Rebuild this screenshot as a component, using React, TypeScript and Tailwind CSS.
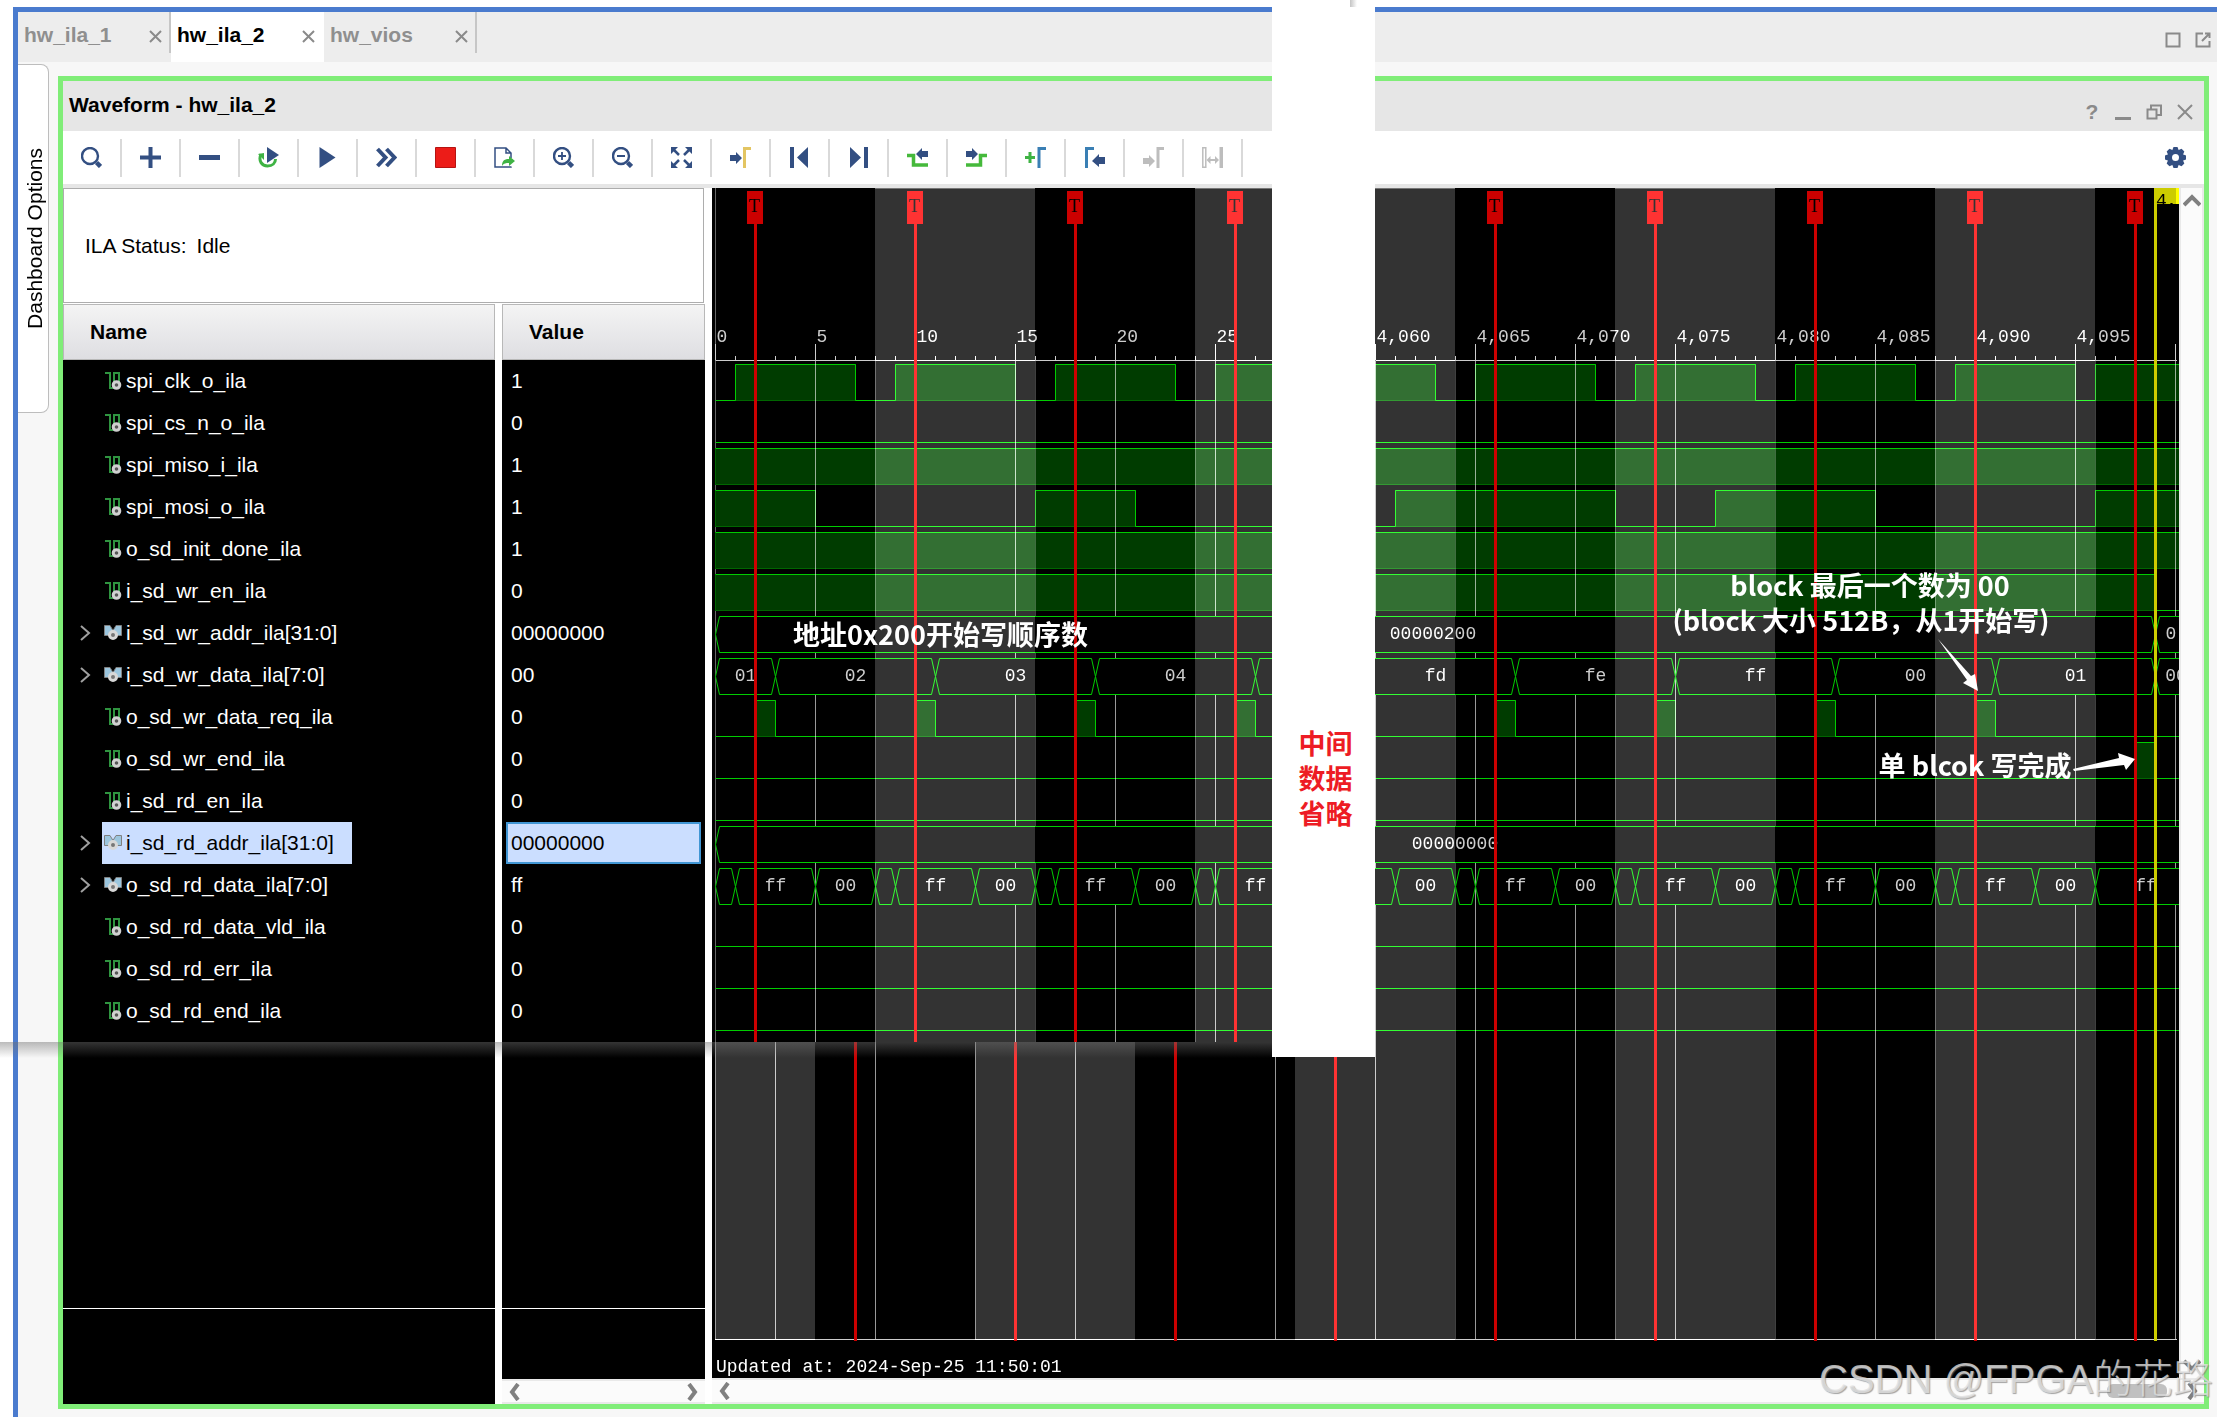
import React from "react";

type Signal = { name: string; value: string; bus?: boolean; selected?: boolean };

const signals: Signal[] = [
  { name: "spi_clk_o_ila", value: "1" },
  { name: "spi_cs_n_o_ila", value: "0" },
  { name: "spi_miso_i_ila", value: "1" },
  { name: "spi_mosi_o_ila", value: "1" },
  { name: "o_sd_init_done_ila", value: "1" },
  { name: "i_sd_wr_en_ila", value: "0" },
  { name: "i_sd_wr_addr_ila[31:0]", value: "00000000", bus: true },
  { name: "i_sd_wr_data_ila[7:0]", value: "00", bus: true },
  { name: "o_sd_wr_data_req_ila", value: "0" },
  { name: "o_sd_wr_end_ila", value: "0" },
  { name: "i_sd_rd_en_ila", value: "0" },
  { name: "i_sd_rd_addr_ila[31:0]", value: "00000000", bus: true, selected: true },
  { name: "o_sd_rd_data_ila[7:0]", value: "ff", bus: true },
  { name: "o_sd_rd_data_vld_ila", value: "0" },
  { name: "o_sd_rd_err_ila", value: "0" },
  { name: "o_sd_rd_end_ila", value: "0" },
];

/* ---------- icons ---------- */

const NAVY = "#334f82";
const GREEN = "#3fb344";
const GREY = "#bdbdbd";

function Icon({ children }: { children: React.ReactNode }) {
  return (
    <svg viewBox="0 0 21 21" className="h-[21px] w-[21px]" fill="none" aria-hidden="true">
      {children}
    </svg>
  );
}

const magnifier = (
  <>
    <circle cx="9" cy="9" r="8" stroke={NAVY} strokeWidth="2.400" />
    <path d="M15.500 15.500l4 4" stroke={NAVY} strokeWidth="4.500" />
  </>
);

const tools: { label: string; icon: React.ReactNode }[] = [
  { label: "Search", icon: magnifier },
  { label: "Add", icon: <path d="M10.5 0v21M0 10.5h21" stroke={NAVY} strokeWidth="4" /> },
  { label: "Remove", icon: <path d="M0 10.5h21" stroke={NAVY} strokeWidth="5" /> },
  {
    label: "Run trigger",
    icon: (
      <>
        <path d="M3 7C0 14 4 19 9.500 19c5 0 8-3 8-7" stroke={GREEN} strokeWidth="3" />
        <path d="M0 7l6-1v7z" fill={GREEN} />
        <path d="M9 0l12 8-12 8z" fill={NAVY} />
      </>
    ),
  },
  { label: "Run", icon: <path d="M2.500 0l16 10.500-16 10.500z" fill={NAVY} /> },
  { label: "Run immediate", icon: <path d="M1.500 2l8 8.500-8 8.500M10.500 2l8 8.500-8 8.500" stroke={NAVY} strokeWidth="4" /> },
  { label: "Stop", icon: <path d="M.5.5h20v20H.5z" fill="#ec1c18" stroke="#b51412" /> },
  {
    label: "Export",
    icon: (
      <>
        <path d="M17 19.500v.5H1V1h11l5 5v5M12 1v5h5" stroke={NAVY} strokeWidth="1.500" />
        <path d="M8 19c0-6 3-7 7-7V9l6 5-6 5v-3c-3 0-5 0-7 3z" fill={GREEN} />
      </>
    ),
  },
  {
    label: "Zoom in",
    icon: (
      <>
        {magnifier}
        <path d="M9 5v8M5 9h8" stroke={NAVY} strokeWidth="1.800" />
      </>
    ),
  },
  {
    label: "Zoom out",
    icon: (
      <>
        {magnifier}
        <path d="M5 9h8" stroke={NAVY} strokeWidth="2" />
      </>
    ),
  },
  {
    label: "Zoom fit",
    icon: (
      <>
        <path d="M2 2l6 6M19 2l-6 6M2 19l6-6M19 19l-6-6" stroke={NAVY} strokeWidth="2.500" />
        <path d="M0 0h7L0 7zM21 0v7l-7-7zM0 21v-7l7 7zM21 21h-7l7-7z" fill={NAVY} />
      </>
    ),
  },
  {
    label: "Go to cursor",
    icon: (
      <>
        <path d="M0 8h6V5l6 6-6 6v-3H0z" fill={NAVY} />
        <path d="M14.500 21V1.500H21" stroke="#e3c562" strokeWidth="3" />
      </>
    ),
  },
  { label: "First sample", icon: <path d="M1 0h4v21H1zM19 0v21L8 10.500z" fill={NAVY} /> },
  { label: "Last sample", icon: <path d="M16 0h4v21h-4zM2 0v21l11-10.500z" fill={NAVY} /> },
  {
    label: "Previous transition",
    icon: (
      <>
        <path d="M0 8.500h6.500V18H21" stroke="#45b93b" strokeWidth="3.500" />
        <path d="M21 4h-6V1L9 7l6 6v-3h6z" fill={NAVY} />
      </>
    ),
  },
  {
    label: "Next transition",
    icon: (
      <>
        <path d="M21 8.500h-6.500V18H0" stroke="#45b93b" strokeWidth="3.500" />
        <path d="M0 4h6V1l6 6-6 6v-3H0z" fill={NAVY} />
      </>
    ),
  },
  {
    label: "Add marker",
    icon: (
      <>
        <path d="M5 5v11M0 10.500h10" stroke={GREEN} strokeWidth="3" />
        <path d="M14 21V1.500h7" stroke="#3a7fb4" strokeWidth="3" />
      </>
    ),
  },
  {
    label: "Previous marker",
    icon: (
      <>
        <path d="M2.500 21V1.500H10" stroke="#3a7fb4" strokeWidth="3" />
        <path d="M21 10h-6V7l-7 7 7 6v-3h6z" fill={NAVY} />
      </>
    ),
  },
  {
    label: "Next marker",
    icon: (
      <>
        <path d="M0 11h6V8l6 6-6 6v-3H0z" fill={GREY} />
        <path d="M15 21V1.500h6" stroke={GREY} strokeWidth="3" />
      </>
    ),
  },
  {
    label: "Swap cursors",
    icon: (
      <>
        <path d="M.8.8h3v19.500h-3z" stroke={GREY} strokeWidth="1.500" />
        <path d="M17.500 0H21v21h-3.500z" fill={GREY} />
        <path d="M4.500 13l4-4v3h4.500V9l4 4-4 4v-3H8.500v3z" fill={GREY} />
      </>
    ),
  },
];

function GearIcon() {
  return (
    <Icon>
      <g fill={NAVY}>
        {[0, 45, 90, 135].map((a) => (
          <path key={a} d="M8.500 0h4l1.500 4v13l-1.500 4h-4L7 17V4z" transform={`rotate(${a} 10.500 10.500)`} />
        ))}
      </g>
      <circle cx="10.500" cy="10.500" r="3.500" fill="#fff" />
    </Icon>
  );
}

function ScalarIcon() {
  return (
    <svg viewBox="0 0 18 18" className="h-[18px] w-[18px] shrink-0" fill="none" aria-hidden="true">
      <path d="M1 1h5v15h4V1h5v15" stroke="#2f9440" strokeWidth="2" />
      <circle cx="12.500" cy="13" r="3.300" fill="#555" stroke="#d0d0d0" strokeWidth="3" />
    </svg>
  );
}

function BusIcon() {
  return (
    <svg viewBox="0 0 18 18" className="h-[18px] w-[18px] shrink-0" fill="none" aria-hidden="true">
      <path d="M.5 1.500H6l3 5 3-5h5.500v10H.5z" fill="#9cc6de" stroke="#808080" />
      <circle cx="9" cy="11" r="3.500" fill="#777" stroke="#d8d8d8" strokeWidth="3" />
    </svg>
  );
}

function Chevron({ d, color = "#808080" }: { d: string; color?: string }) {
  return (
    <svg viewBox="0 0 18 18" className="h-[18px] w-[18px]" fill="none" aria-hidden="true">
      <path d={d} stroke={color} strokeWidth="4" />
    </svg>
  );
}

const LEFT = "M12 1L6 9l6 8";
const RIGHT = "M6 1l6 8-6 8";
const UP = "M1 13l8-8 8 8";
const DOWN = "M1 5l8 8 8-8";

/* ---------- waveform ---------- */

const lx = (u: number) => 715.5 + 20 * u;
const rx = (u: number) => 1375.5 + 20 * (u - 4060);
const top = (row: number) => 364.5 + 42 * row;
const range = (n: number) => Array.from({ length: n }, (_, i) => i);

type Scale = (u: number) => number;
type Span = [number, number];

function Bit({ row, scale, from, to, highs }: { row: number; scale: Scale; from: number; to: number; highs: Span[] }) {
  const hi = top(row);
  const lo = hi + 36;
  let d = "";
  let cur = from;
  for (const [a, b] of highs) {
    if (a > cur) d += `M${scale(cur)} ${lo}H${scale(a)}V${hi}H${scale(b)}`;
    else d += `M${scale(a)} ${hi}H${scale(b)}`;
    if (b < to) d += `V${lo}`;
    cur = b;
  }
  if (cur < to) d += `M${scale(cur)} ${lo}H${scale(to)}`;
  return (
    <g>
      {highs.map(([a, b]) => (
        <rect key={a} x={scale(a)} y={hi} width={scale(b) - scale(a)} height={36} fill="#003c00" stroke="#006600" />
      ))}
      <path d={d} fill="none" stroke="#00cc00" />
    </g>
  );
}

type BusSeg = { a: number; b: number; text?: string; tx?: number };

function Bus({ row, scale, segs }: { row: number; scale: Scale; segs: BusSeg[] }) {
  const hi = top(row);
  const mid = hi + 18;
  const lo = hi + 36;
  return (
    <g>
      {segs.map((s) => {
        const a = scale(s.a);
        const b = scale(s.b);
        return (
          <g key={s.a}>
            <path
              d={`M${a} ${mid}L${a + 4} ${hi}H${b - 4}L${b} ${mid}L${b - 4} ${lo}H${a + 4}Z`}
              fill="#000"
              stroke="#00cc00"
            />
            {s.text && (
              <text x={s.tx ?? (a + b) / 2} y={hi + 22} textAnchor="middle">
                {s.text}
              </text>
            )}
          </g>
        );
      })}
    </g>
  );
}

function Ruler({ scale, from, to, end }: { scale: Scale; from: number; to: number; end: number }) {
  return (
    <g>
      <path d={`M${scale(from)} 360.500H${end}`} stroke="#ccc" />
      {range(to - from + 1).map((i) => {
        const u = from + i;
        const major = u % 5 === 0;
        return (
          <g key={u}>
            <path d={`M${scale(u)} ${major ? 344 : 356}V360`} stroke="#ccc" />
            {major && scale(u) + 12 < end && (
              <text x={scale(u) + 1} y={342}>
                {u.toLocaleString("en-US")}
              </text>
            )}
          </g>
        );
      })}
    </g>
  );
}

function Trigger({ x, y1, y2, flag }: { x: number; y1: number; y2: number; flag?: boolean }) {
  return (
    <g>
      <path d={`M${x} ${y1}V${y2}`} stroke="#cc0000" strokeWidth="3" />
      {flag && (
        <>
          <rect x={x - 8.5} y={191} width={16} height={33} fill="#cc0000" />
          <text x={x - 1} y={212} textAnchor="middle" className="fill-black font-['Liberation_Serif',serif] text-[18px]">
            T
          </text>
        </>
      )}
    </g>
  );
}

function Band({ x, w, y, h }: { x: number; w: number; y: number; h: number }) {
  return (
    <g className="mix-blend-plus-lighter">
      <rect x={x} y={y} width={w} height={h} fill="#333" shapeRendering="crispEdges" />
    </g>
  );
}

const rdLeft: BusSeg[] = [0, 8, 16, 24].flatMap((k) => [
  { a: k, b: k + 1 },
  { a: k + 1, b: k + 5, text: "ff" },
  { a: k + 5, b: k + 8, text: "00" },
]);
const rdRight: BusSeg[] = [
  { a: 4057, b: 4061 },
  { a: 4061, b: 4064, text: "00" },
  ...[4064, 4072, 4080, 4088].flatMap((k) => [
    { a: k, b: k + 1 },
    { a: k + 1, b: k + 5, text: "ff" },
    { a: k + 5, b: k + 8, text: "00" },
  ]),
  { a: 4096, b: 4104, text: "ff", tx: 2146 },
];

function Waveform() {
  const flat = [9, 10, 13, 14, 15];
  return (
    <svg
      viewBox="712 188 1467 1190"
      preserveAspectRatio="xMinYMin slice"
      className="isolate block h-[1190px] w-full bg-black fill-[#ccc] font-['Liberation_Mono',monospace] text-[18px]"
      role="img"
      aria-label="Waveform"
    >
      <defs>
        <clipPath id="head">
          <rect x="712" y="188" width="560" height="854" />
        </clipPath>
        <clipPath id="tail">
          <rect x="1375" y="188" width="804" height="1153" />
        </clipPath>
      </defs>
      <rect x="712" y="188" width="1467" height="1190" fill="#000" />

      <g clipPath="url(#head)">
        <path d="M715.500 188V1042" stroke="#666" />
        <Ruler scale={lx} from={0} to={28} end={1290} />
        <Bit row={0} scale={lx} from={0} to={28} highs={[[1, 7], [9, 15], [17, 23], [25, 31]]} />
        <Bit row={1} scale={lx} from={0} to={28} highs={[]} />
        <Bit row={2} scale={lx} from={0} to={28} highs={[[0, 28]]} />
        <Bit row={3} scale={lx} from={0} to={28} highs={[[0, 5], [16, 21]]} />
        <Bit row={4} scale={lx} from={0} to={28} highs={[[0, 28]]} />
        <Bit row={5} scale={lx} from={0} to={28} highs={[[0, 28]]} />
        <Bit row={8} scale={lx} from={0} to={28} highs={[[2, 3], [10, 11], [18, 19], [26, 27]]} />
        {flat.map((r) => (
          <Bit key={r} row={r} scale={lx} from={0} to={28} highs={[]} />
        ))}
        {[5, 15, 20, 25].map((u) => (
          <path key={u} d={`M${lx(u)} 361V1042`} stroke="#fff" strokeOpacity="0.6" />
        ))}
        {[8, 16, 24].map((u) => (
          <path key={u} d={`M${lx(u)} 361V1042`} stroke="#fff" strokeOpacity="0.25" />
        ))}
        <Bus row={6} scale={lx} segs={[{ a: 0, b: 40 }]} />
        <Bus
          row={7}
          scale={lx}
          segs={[
            { a: 0, b: 3, text: "01" },
            { a: 3, b: 11, text: "02" },
            { a: 11, b: 19, text: "03" },
            { a: 19, b: 27, text: "04" },
            { a: 27, b: 35 },
          ]}
        />
        <Bus row={11} scale={lx} segs={[{ a: 0, b: 40 }]} />
        <Bus row={12} scale={lx} segs={rdLeft} />
        {[2, 10, 18, 26].map((u) => (
          <Trigger key={u} x={lx(u)} y1={224} y2={1042} flag />
        ))}
        <Band x={875} w={160} y={188} h={854} />
        <Band x={1195} w={77} y={188} h={854} />
      </g>

      {/* Area under the bottom edge of the first capture */}
      <g>
        <path d="M715.500 1042V1339M975.500 1042V1339" stroke="#666" />
        <path d="M775.500 1042V1339M875.500 1042V1339M1075.500 1042V1339M1275.500 1042V1339" stroke="#999" />
        <path d="M715 1339.500H1375" stroke="#ccc" />
        {[855.5, 1015.5, 1175.5, 1335.5].map((x) => (
          <Trigger key={x} x={x} y1={1042} y2={1341} />
        ))}
        <Band x={715} w={100} y={1042} h={298} />
        <Band x={975} w={160} y={1042} h={298} />
        <Band x={1295} w={80} y={1042} h={298} />
      </g>

      <g clipPath="url(#tail)">
        <Ruler scale={rx} from={4060} to={4100} end={2177} />
        <path d="M1375 1339.500H2177" stroke="#ccc" />
        <Bit row={0} scale={rx} from={4057} to={4101} highs={[[4057, 4063], [4065, 4071], [4073, 4079], [4081, 4087], [4089, 4095], [4096, 4102]]} />
        <Bit row={1} scale={rx} from={4057} to={4101} highs={[]} />
        <Bit row={2} scale={rx} from={4057} to={4101} highs={[[4057, 4102]]} />
        <Bit row={3} scale={rx} from={4057} to={4101} highs={[[4061, 4072], [4077, 4085], [4096, 4102]]} />
        <Bit row={4} scale={rx} from={4057} to={4101} highs={[[4057, 4102]]} />
        <Bit row={5} scale={rx} from={4057} to={4101} highs={[[4057, 4099]]} />
        <Bit row={8} scale={rx} from={4057} to={4101} highs={[[4066, 4067], [4074, 4075], [4082, 4083], [4090, 4091]]} />
        <Bit row={9} scale={rx} from={4057} to={4101} highs={[[4098, 4099]]} />
        {flat.slice(1).map((r) => (
          <Bit key={r} row={r} scale={rx} from={4057} to={4101} highs={[]} />
        ))}
        {[4060, 4065, 4070, 4075, 4085, 4095, 4100].map((u) => (
          <path key={u} d={`M${rx(u)} 361V1339`} stroke="#fff" strokeOpacity="0.6" />
        ))}
        {[4064, 4072, 4080, 4088, 4096].map((u) => (
          <path key={u} d={`M${rx(u)} 361V1339`} stroke="#fff" strokeOpacity="0.25" />
        ))}
        <Bus
          row={6}
          scale={rx}
          segs={[
            { a: 4050, b: 4099, text: "00000200", tx: 1433 },
            { a: 4099, b: 4110, text: "0", tx: 2171 },
          ]}
        />
        <Bus
          row={7}
          scale={rx}
          segs={[
            { a: 4059, b: 4067, text: "fd" },
            { a: 4067, b: 4075, text: "fe" },
            { a: 4075, b: 4083, text: "ff" },
            { a: 4083, b: 4091, text: "00" },
            { a: 4091, b: 4099, text: "01" },
            { a: 4099, b: 4110, text: "00", tx: 2176 },
          ]}
        />
        <Bus row={11} scale={rx} segs={[{ a: 4050, b: 4110, text: "00000000", tx: 1455 }]} />
        <Bus row={12} scale={rx} segs={rdRight} />
        {[4066, 4074, 4082, 4090, 4098].map((u) => (
          <Trigger key={u} x={rx(u)} y1={224} y2={1341} flag />
        ))}
        <path d="M2155.500 188V1341" stroke="#cccc00" strokeWidth="3" />
        <rect x="2154" y="188" width="25" height="16" fill="#cccc00" />
        <rect x="2176" y="188" width="3" height="16" fill="#ffff00" />
        <svg x="2154" y="188" width="25" height="16">
          <text x="2" y="18" className="fill-black">4,</text>
        </svg>
        <Band x={1375} w={80} y={188} h={1152} />
        <Band x={1615} w={160} y={188} h={1152} />
        <Band x={1935} w={160} y={188} h={1152} />
      </g>

      <path d="M875 188.500h160M1195 188.500h180M1375 188.500h80M1615 188.500h160M1935 188.500h160" stroke="#777" />
      <text x="716" y="1372" className="fill-white">
        Updated at: 2024-Sep-25 11:50:01
      </text>

      <g className="fill-white font-['Noto_Sans_CJK_SC',sans-serif] text-[27px] font-bold">
        <text x="793" y="645">地址0x200开始写顺序数</text>
        <text x="1870" y="596" textAnchor="middle">block 最后一个数为 00</text>
        <text x="1861" y="631" textAnchor="middle">(block 大小 512B，从1开始写)</text>
        <text x="1975" y="776" textAnchor="middle">单 blcok 写完成</text>
        <path d="M1938 639l33 37 4-2 3 17-15-8 4-3z" />
        <path d="M2073 769l46-11-1-5 17 6-9 11-2-5-50 6z" />
      </g>
    </svg>
  );
}

/* ---------- page ---------- */

function Tab({ label, active, divided = true }: { label: string; active?: boolean; divided?: boolean }) {
  return (
    <div className={active ? "h-[50px] bg-white text-black" : "h-[50px] text-[#8f8f8f]"}>
      <div
        className={
          divided && !active
            ? "flex h-[41px] w-[153px] items-center justify-between border-r-2 border-[#c6c6c6] pr-[7px] pl-[6px]"
            : "flex h-[41px] w-[153px] items-center justify-between pr-[9px] pl-[6px]"
        }
      >
        <button type="button" className="pt-1 font-bold">
          {label}
        </button>
        <button type="button" aria-label={`Close ${label}`} className="pt-2">
          <svg viewBox="0 0 13 13" className="h-[13px] w-[13px]" aria-hidden="true">
            <path d="M1 1l11 11M12 1L1 12" stroke="#8a8a8a" strokeWidth="2" />
          </svg>
        </button>
      </div>
    </div>
  );
}

function WindowButton({ label, d, width = 2 }: { label: string; d: string; width?: number }) {
  return (
    <button type="button" aria-label={label}>
      <svg viewBox="0 0 16 16" className="h-4 w-4" fill="none" aria-hidden="true">
        <path d={d} stroke="#8a8a8a" strokeWidth={width} />
      </svg>
    </button>
  );
}

function SignalTable() {
  return (
    <table className="w-[642px] table-fixed border-separate border-spacing-0 text-left">
      <colgroup>
        <col className="w-[432px]" />
        <col className="w-[7px]" />
        <col className="w-[203px]" />
      </colgroup>
      <thead>
        <tr className="h-14">
          <th className="border border-[#b8b8b8] bg-linear-to-b from-[#f4f4f4] to-[#dedee2] pl-[26px]">Name</th>
          <td />
          <th className="border border-[#b8b8b8] bg-linear-to-b from-[#f4f4f4] to-[#dedee2] pl-[26px]">Value</th>
        </tr>
      </thead>
      <tbody className="text-white">
        {signals.map((s) => (
          <tr key={s.name} className="h-[42px]">
            <td className="bg-black p-0">
              <div className="flex items-center pl-[13px]">
                {s.bus ? (
                  <button type="button" aria-label={`Expand ${s.name}`} className="w-[26px]">
                    <svg viewBox="0 0 18 18" className="h-[18px] w-[18px]" fill="none" aria-hidden="true">
                      <path d="M5 2l8 7-8 7" stroke="#a0a0a0" strokeWidth="2" />
                    </svg>
                  </button>
                ) : (
                  <span className="w-[26px]" />
                )}
                <span
                  className={
                    s.selected
                      ? "flex h-[42px] items-center gap-1 bg-[#cbdeff] pr-[18px] pl-[2px] text-black"
                      : "flex h-[42px] items-center gap-1 pl-[2px]"
                  }
                >
                  {s.bus ? <BusIcon /> : <ScalarIcon />}
                  {s.name}
                </span>
              </div>
            </td>
            <td />
            <td className="bg-black py-0 pr-1 pl-1">
              {s.selected ? (
                <div className="flex h-[42px] items-center border-2 border-[#4196d4] bg-[#cbdeff] pl-[3px] text-black">
                  {s.value}
                </div>
              ) : (
                <div className="flex h-[42px] items-center pl-[5px]">{s.value}</div>
              )}
            </td>
          </tr>
        ))}
      </tbody>
    </table>
  );
}

export default function App() {
  return (
    <div className="relative overflow-hidden bg-white pt-[7px] pl-[13px] font-['Liberation_Sans',Arial,sans-serif] text-[21px] leading-6 text-black">
      <div className="border-t-[5px] border-l-[5px] border-[#4a7bce] bg-[#f7f7f7]">
        <header className="flex h-[50px] bg-[#ededed]">
          <nav className="flex items-start">
            <Tab label="hw_ila_1" />
            <Tab label="hw_ila_2" active />
            <Tab label="hw_vios" />
          </nav>
          <div className="ml-auto flex items-center gap-[14px] pt-[6px] pr-[6px]">
            <WindowButton label="Maximize" d="M1.500 1.500h13v13h-13z" />
            <WindowButton label="Float" d="M8 1.500H1.500v13h13V9M7 9l7-7M10 1.500h4.500V6" />
          </div>
        </header>

        <div className="flex pt-[2px]">
          <aside className="h-[349px] w-[31px] shrink-0 rounded-r-lg border border-l-0 border-[#bdbdbd] bg-white">
            <button type="button" className="flex h-full w-full items-center justify-center pl-1 [writing-mode:vertical-rl]">
              <span className="rotate-180">Dashboard Options</span>
            </button>
          </aside>

          <main className="mt-3 mr-2 mb-2 ml-[9px] min-w-0 flex-1 border-[5px] border-[#80ed78] bg-white">
            <div className="flex h-[50px] items-center bg-[#e6e6e6] pr-[11px] pl-[6px]">
              <h1 className="pb-[2px] font-bold">Waveform - hw_ila_2</h1>
              <div className="ml-auto flex items-center gap-[15px] pt-3">
                <button type="button" aria-label="Help" className="w-4 font-bold text-[#8a8a8a]">
                  ?
                </button>
                <WindowButton label="Minimize" d="M0 14.500h16" width={3} />
                <WindowButton label="Restore" d="M5 5V1.500h10V11h-4M1.500 5.500h9v9h-9z" />
                <WindowButton label="Close" d="M1 1l14 14M15 1L1 15" />
              </div>
            </div>

            <div className="flex h-[57px] items-center border-b-4 border-[#e6e6e6]">
              {tools.map((t) => (
                <button
                  key={t.label}
                  type="button"
                  aria-label={t.label}
                  className="flex h-[38px] w-[59px] shrink-0 items-center justify-center border-r-2 border-[#d9d9d9]"
                >
                  <Icon>{t.icon}</Icon>
                </button>
              ))}
              <button type="button" aria-label="Settings" className="mr-[18px] ml-auto">
                <GearIcon />
              </button>
            </div>

            <div className="flex">
              <section className="flex w-[649px] shrink-0 flex-col">
                <div className="mb-px flex h-[115px] w-[641px] items-center gap-[10px] border border-[#adadad] pl-[21px]">
                  <span>ILA Status:</span>
                  <span>Idle</span>
                </div>
                <SignalTable />
                <div className="flex flex-1">
                  <div className="flex w-[432px] flex-col bg-black">
                    <div className="h-[277px] border-b border-white" />
                  </div>
                  <div className="ml-[7px] flex w-[203px] flex-col bg-black">
                    <div className="h-[277px] border-b border-white" />
                    <div className="mt-auto flex h-[25px] items-center justify-between border-y-2 border-[#e9e9e9] bg-[#fbfbfb] px-1">
                      <button type="button" aria-label="Scroll values left">
                        <Chevron d={LEFT} />
                      </button>
                      <button type="button" aria-label="Scroll values right">
                        <Chevron d={RIGHT} />
                      </button>
                    </div>
                  </div>
                </div>
              </section>

              <section className="min-w-0 flex-1">
                <div className="flex">
                  <div className="min-w-0 flex-1">
                    <Waveform />
                  </div>
                  <div className="flex w-[25px] shrink-0 flex-col items-center justify-between border-x-2 border-[#e9e9e9] bg-[#fbfbfb] py-1">
                    <button type="button" aria-label="Scroll up">
                      <Chevron d={UP} />
                    </button>
                    <button type="button" aria-label="Scroll down">
                      <Chevron d={DOWN} />
                    </button>
                  </div>
                </div>
                <div className="flex h-[26px] items-center border-y-2 border-[#e9e9e9] bg-[#fbfbfb] pr-[3px] pl-1">
                  <button type="button" aria-label="Scroll waveform left">
                    <Chevron d={LEFT} />
                  </button>
                  <div className="mr-4 ml-auto h-[14px] w-[60px] rounded-md bg-[#c0c0c0]" />
                  <button type="button" aria-label="Scroll waveform right">
                    <Chevron d={RIGHT} />
                  </button>
                </div>
              </section>
            </div>
          </main>
        </div>
      </div>

      {/* Edge of the pasted first capture */}
      <div className="absolute top-[1042px] left-0 h-4 w-[1272px] bg-linear-to-b from-[#70707078] to-transparent" />
      <div className="absolute top-0 left-[1350px] h-[7px] w-[7px] bg-linear-to-r from-[#c4c4c4] to-white" />

      {/* Omitted samples */}
      <div className="absolute top-[7px] left-[1272px] flex h-[1050px] w-[103px] flex-col items-center bg-white pt-[718px] pl-1 font-['Noto_Sans_CJK_SC',sans-serif] text-[27px] leading-[35px] font-bold text-[#ed1c24]">
        <span>中间</span>
        <span>数据</span>
        <span>省略</span>
      </div>

      <div className="absolute right-[4px] bottom-[14px] font-['Liberation_Sans','Noto_Sans_CJK_SC',sans-serif] text-[40px] leading-[48px] font-light whitespace-nowrap text-[#e2e2e2cc] [text-shadow:1px_1px_1px_#777777aa]">
        CSDN @FPGA的花路
      </div>
    </div>
  );
}
